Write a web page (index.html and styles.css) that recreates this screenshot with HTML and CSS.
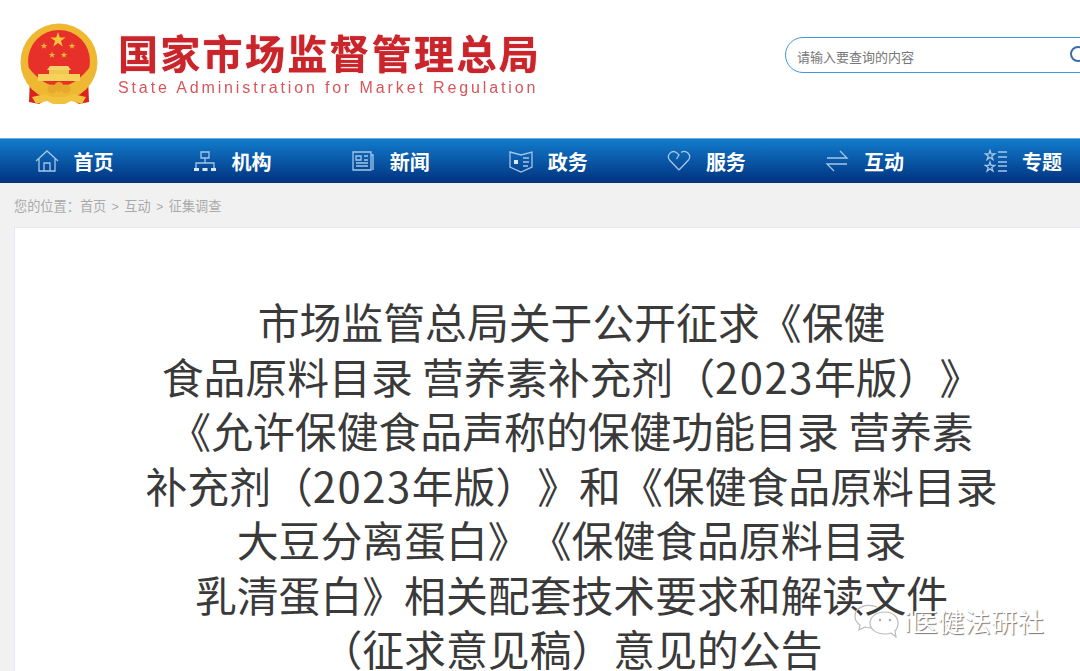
FILE: index.html
```html
<!DOCTYPE html>
<html lang="zh-CN">
<head>
    <meta charset="UTF-8">
    <title>市场监管总局关于公开征求意见的公告</title>
    <link rel="stylesheet" href="styles.css">
</head>
<body>
    <svg class="defs" width="0" height="0">
        <defs>
            <polygon id="star" points="0,-1 .225,-.309 .951,-.309 .363,.118 .588,.809 0,.382 -.588,.809 -.363,.118 -.951,-.309 -.225,-.309"/>
        </defs>
    </svg>

    <header class="top">
        <svg class="emblem" viewBox="0 0 80 84" width="80" height="84">
            <path d="M11 56 L10 80 L20 82 L30 76 H50 L60 82 L70 80 L69 56 Z" fill="#d8231f"/>
            <circle cx="40" cy="40" r="38.500" fill="#eeb832"/>
            <circle cx="40" cy="39" r="31" fill="#e8302a"/>
            <path d="M9 45 Q40 84 71 45 L71 60 Q40 92 9 60 Z" fill="#eeb832"/>
            <path d="M31 44 L28 48 H52 L49 44 Z" fill="#f4d468"/>
            <rect x="30" y="48" width="20" height="4" fill="#f0c850"/>
            <rect x="19" y="52" width="42" height="7" fill="#f6d25a"/>
            <use href="#star" transform="translate(39 18) scale(8)" fill="#f7c63c"/>
            <use href="#star" transform="translate(25 24) scale(3.500)" fill="#f0b93a"/>
            <use href="#star" transform="translate(53 24) scale(3.500)" fill="#f0b93a"/>
            <use href="#star" transform="translate(33 33) scale(3.500)" fill="#f0b93a"/>
            <use href="#star" transform="translate(45 33) scale(3.500)" fill="#f0b93a"/>
            <circle cx="33" cy="67" r="4.500" fill="#e7a92c"/>
            <circle cx="47" cy="67" r="4.500" fill="#e7a92c"/>
            <circle cx="40" cy="65" r="5" fill="#e7a92c"/>
            <path d="M13 75 L26 72 L34 75 H46 L54 72 L67 75 L63 82 L52 79 L46 82 H34 L28 79 L17 82 Z" fill="#f1c23e"/>
        </svg>
        <div class="brand">
            <div class="brand-cn">国家市场监督管理总局</div>
            <div class="brand-en">State Administration for Market Regulation</div>
        </div>
        <div class="search">
            <span class="search-text">请输入要查询的内容</span>
            <svg class="search-icon" viewBox="0 0 20 20" width="20" height="20">
                <circle cx="9" cy="9" r="7" fill="none" stroke="#3b6ea8" stroke-width="2"/>
            </svg>
        </div>
    </header>

    <nav class="nav">
        <a class="nav-item">
            <svg viewBox="0 0 24 24" width="24" height="24"><path d="M1 12 L12 2 L23 12 M4 10 V22 H20 V10 M9 22 V14 H15 V22"/></svg>
            <span>首页</span>
        </a>
        <a class="nav-item">
            <svg viewBox="0 0 24 24" width="24" height="24"><path d="M8 3 H16 V9 H8 Z M12 9 V14 M3 19 V14 H21 V19"/><path class="solid" d="M1 19 H6 V22 H1 Z M9.500 19 H14.500 V22 H9.500 Z M18 19 H23 V22 H18 Z"/></svg>
            <span>机构</span>
        </a>
        <a class="nav-item">
            <svg viewBox="0 0 24 24" width="24" height="24"><path d="M2 3 H20 V21 H2 Z M20 6 H22 V21 M5 7 H10 V11 H5 Z M13 7 H17 M13 11 H17 M5 14 H17 M5 17 H17"/></svg>
            <span>新闻</span>
        </a>
        <a class="nav-item">
            <svg viewBox="0 0 24 24" width="24" height="24"><path d="M1 3 L12 6 L23 3 V18 L12 23 L1 18 Z M14 9 H20 M14 13 H20 M14 17 H19"/><path class="solid" d="M5 11 H9 V15 H5 Z"/></svg>
            <span>政务</span>
        </a>
        <a class="nav-item">
            <svg viewBox="0 0 24 24" width="24" height="24"><path d="M12 21 L2.500 11 C-1 6 5 0 10 4 L12 6 L9.500 10 M12 21 L21.500 11 C25 6 19 0 14 3.500"/></svg>
            <span>服务</span>
        </a>
        <a class="nav-item">
            <svg viewBox="0 0 24 24" width="24" height="24"><path d="M2 9 H22 L15 2 M22 15 H2 L9 22"/></svg>
            <span>互动</span>
        </a>
        <a class="nav-item">
            <svg viewBox="0 0 24 24" width="24" height="24"><use href="#star" transform="translate(6 6.500) scale(5)"/><use href="#star" transform="translate(6 18) scale(5)"/><path d="M14 3 H23 M14 8 H23 M14 13 H23 M14 17 H23 M14 22 H23"/></svg>
            <span>专题</span>
        </a>
    </nav>

    <main class="page">
        <div class="crumbs">您的位置：<span class="crumb">首页</span><span class="sep">&gt;</span><span class="crumb">互动</span><span class="sep">&gt;</span><span class="crumb">征集调查</span></div>
        <article class="card">
            <h1 class="title">市场监管总局关于公开征求《保健<br>食品原料目录 营养素补充剂（<span class="num">2023</span>年版）》<br>《允许保健食品声称的保健功能目录 营养素<br>补充剂（<span class="num">2023</span>年版）》和《保健食品原料目录<br>大豆分离蛋白》《保健食品原料目录<br>乳清蛋白》相关配套技术要求和解读文件<br>（征求意见稿）意见的公告</h1>
        </article>
    </main>

    <div class="mark">
        <svg viewBox="0 0 46 34" width="46" height="34">
            <path d="M24 3 C14 -1 2 3 2 12 C2 16 4 19 7 21 L6 26 L12 23 C15 24 17 24 19 24"/>
            <path class="front" d="M32 8 C22 8 17 14 17 19 C17 26 24 30 32 30 C34 30 36 30 38 29 L43 33 L42 27 C44 25 45 22 45 19 C45 13 40 8 32 8 Z"/>
            <circle cx="27" cy="16" r="1.200"/><circle cx="37" cy="16" r="1.200"/>
        </svg>
        <span>i医健法研社</span>
    </div>
</body>
</html>
```

FILE: styles.css
```css
html, body {
    margin: 0;
    padding: 0;
    height: 671px;
    overflow: hidden;
}
body {
    position: relative;
    font-family: "Noto Sans CJK SC", "Liberation Sans", sans-serif;
    background-color: #f1f1f1;
}
.defs {
    display: block;
}

/* header */
.top {
    display: flex;
    align-items: flex-start;
    height: 138px;
    background-color: white;
    overflow: hidden;
}
.emblem {
    flex: none;
    margin: 22px 0 0 19px;
    filter: blur(0.5px);
}
.brand {
    flex: none;
    width: 440px;
    margin: 28px 0 0 19px;
    filter: blur(0.4px);
}
.brand-cn {
    font-size: 40px;
    line-height: 48px;
    font-weight: 700;
    letter-spacing: 2.3px;
    color: #c9252b;
    text-shadow: 0 0 1px #c9252b;
    white-space: nowrap;
}
.brand-en {
    margin-top: 2px;
    font-family: "Liberation Sans", sans-serif;
    font-size: 16px;
    line-height: 20px;
    letter-spacing: 2.87px;
    color: #d8555a;
    white-space: nowrap;
}
.search {
    flex: none;
    display: flex;
    align-items: center;
    justify-content: space-between;
    box-sizing: border-box;
    width: 320px;
    height: 36px;
    margin: 37px 0 0 227px;
    padding: 0 12px 0 11px;
    border: 1px solid #3f96dd;
    border-radius: 18px;
}
.search-text {
    padding-top: 3px;
    font-size: 13px;
    color: #777;
}
.search-icon {
    margin-right: 3px;
}

/* nav */
.nav {
    display: flex;
    box-sizing: border-box;
    height: 45px;
    padding-left: 35px;
    border-top: 1px solid #6aaade;
    background: linear-gradient(#127ccc, #00327f);
    overflow: hidden;
}
.nav-item {
    flex: 0 0 158.1px;
    display: flex;
    align-items: center;
    gap: 14.500px;
    color: white;
    font-size: 20px;
    font-weight: 700;
}
.nav-item svg {
    flex: none;
    fill: none;
    stroke: #a6c6e6;
    stroke-width: 1.3;
}
.nav-item use {
    stroke-width: 0.26;
}
.nav-item .solid {
    fill: #dbe8f5;
    stroke: none;
}

/* breadcrumb */
.crumbs {
    height: 44px;
    padding-left: 14px;
    font-size: 13.2px;
    line-height: 46px;
    color: #aaa;
    white-space: nowrap;
}
.crumb {
    color: #aaa;
}
.sep {
    margin: 0 5.500px;
    font-family: "Liberation Sans", sans-serif;
    font-size: 12px;
}

/* article */
.card {
    box-sizing: border-box;
    width: 1115px;
    height: 500px;
    margin-left: 14px;
    padding-top: 66px;
    background-color: white;
    border: 1px solid #e4e8f4;
}
.title {
    margin: 0;
    font-size: 41.85px;
    line-height: 54.5px;
    font-weight: 400;
    color: #3a3a3a;
    text-align: center;
    white-space: nowrap;
    text-spacing-trim: space-all;
}
.num {
    letter-spacing: 1.5px;
}

/* watermark over the article */
.mark {
    position: absolute;
    left: 853px;
    top: 604px;
    display: flex;
    align-items: center;
    gap: 5px;
    color: #fff;
    font-size: 26px;
    line-height: 34px;
    letter-spacing: 0.5px;
    text-shadow: 1px 1px 1px #777;
}
.mark svg {
    fill: none;
    stroke: #bbb;
    stroke-width: 1.2;
}
.mark .front {
    fill: rgba(255,255,255,0.8);
}
.mark circle {
    fill: #aaa;
    stroke: none;
}
```
